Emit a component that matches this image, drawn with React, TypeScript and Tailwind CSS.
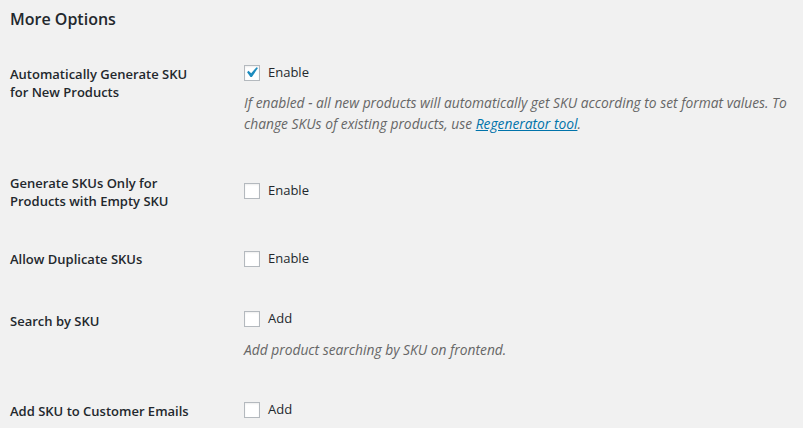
import React from "react";

type Row = {
  label: string[];
  action: string;
  checked?: boolean;
  description?: React.ReactNode;
  rowClass: string;
  labelClass?: string;
  controlClass?: string;
  descClass?: string;
};

const ROWS: Row[] = [
  {
    label: ["Automatically Generate SKU", "for New Products"],
    action: "Enable",
    checked: true,
    rowClass: "mt-[34px]",
    descClass: "mt-[11px]",
    description: (
      <>
        If enabled - all new products will automatically get SKU according to set format values. To
        change SKUs of existing products, use{" "}
        <a href="#" className="text-[#0073aa] underline">
          Regenerator tool
        </a>
        .
      </>
    ),
  },
  {
    label: ["Generate SKUs Only for", "Products with Empty SKU"],
    action: "Enable",
    rowClass: "mt-[40px]",
    controlClass: "pt-[9px]",
  },
  {
    label: ["Allow Duplicate SKUs"],
    action: "Enable",
    rowClass: "mt-[40px]",
    controlClass: "pt-[1px]",
  },
  {
    label: ["Search by SKU"],
    action: "Add",
    rowClass: "mt-[42px]",
    labelClass: "pt-[2px]",
    controlClass: "pt-[1px]",
    descClass: "mt-[12px]",
    description: <>Add product searching by SKU on frontend.</>,
  },
  {
    label: ["Add SKU to Customer Emails"],
    action: "Add",
    rowClass: "mt-[41px]",
    labelClass: "pt-[1px]",
    controlClass: "pt-[1px]",
  },
];

function Checkbox({ checked }: { checked?: boolean }) {
  return (
    <span className="relative block w-4 h-4 shrink-0 bg-white border border-[#b4b9be] shadow-[inset_0_1px_2px_rgba(0,0,0,0.07)]">
      {checked && (
        <svg
          viewBox="0 0 20 20"
          className="absolute left-[-4px] top-[-4px] w-[21px] h-[21px] fill-[#1e8cbe]"
        >
          <path d="M14.83 4.89l1.34.94-5.81 8.38H9.02L5.78 9.67l1.34-1.25 2.57 2.4z" />
        </svg>
      )}
    </span>
  );
}

export default function App() {
  return (
    <div
      className="w-[803px] h-[428px] overflow-hidden bg-[#f1f1f1] text-[#23282d] pl-[10px]"
      style={{ fontFamily: '"Open Sans", "Noto Sans", sans-serif' }}
    >
      <h2 className="pt-[7px] text-[16px] leading-[24px] font-semibold">More Options</h2>

      {ROWS.map((row) => (
        <div key={row.label[0]} className={`flex ${row.rowClass}`}>
          <div className={`w-[234px] shrink-0 text-[13px] leading-[18px] font-semibold ${row.labelClass ?? ""}`}>
            {row.label.map((l) => (
              <div key={l}>{l}</div>
            ))}
          </div>
          <div className={`flex-1 ${row.controlClass ?? ""}`}>
            <label className="flex items-center h-4 gap-[8px] text-[13px]">
              <Checkbox checked={row.checked} />
              <span>{row.action}</span>
            </label>
            {row.description && (
              <p className={`text-[13.8px] leading-[21px] italic text-[#666] ${row.descClass ?? ""}`}>
                {row.description}
              </p>
            )}
          </div>
        </div>
      ))}
    </div>
  );
}
